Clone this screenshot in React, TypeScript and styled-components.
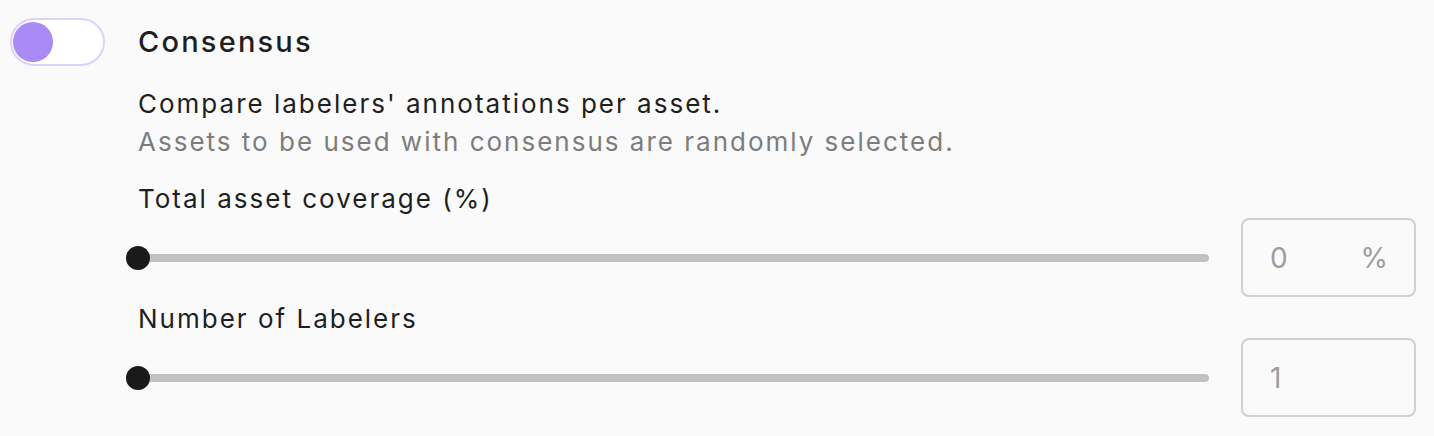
import React from "react";
import styled, { createGlobalStyle } from "styled-components";

const Global = createGlobalStyle`
  html, body {
    margin: 0;
    padding: 0;
    background: #fafafa;
    font-family: Inter, "Noto Sans", sans-serif;
  }
`;

const Panel = styled.div`
  width: 1434px;
  height: 436px;
  background: #fafafa;
  display: grid;
  grid-template-columns: 128px 1fr;
  padding: 18px 18px 0 10px;
  box-sizing: border-box;
`;

const ToggleTrack = styled.div<{ $on: boolean }>`
  width: 95px;
  height: 48px;
  box-sizing: border-box;
  border: 2px solid #ddd2fb;
  border-radius: 24px;
  background: #fff;
  display: flex;
  align-items: center;
  justify-content: ${(p) => (p.$on ? "flex-end" : "flex-start")};
  padding: 0 1px;
`;

const Knob = styled.div`
  width: 40px;
  height: 40px;
  border-radius: 50%;
  background: #a98af6;
`;

const Body = styled.div`
  display: flex;
  flex-direction: column;
`;

const Title = styled.div`
  font-size: 29px;
  font-weight: 500;
  letter-spacing: 2.2px;
  color: #1f1f1f;
  line-height: 48px;
  margin-bottom: 19px;
`;

const Text = styled.div<{ $muted?: boolean }>`
  font-size: 26px;
  line-height: 38px;
  letter-spacing: 2px;
  color: ${(p) => (p.$muted ? "#7d7d7d" : "#1f1f1f")};
`;

const Label = styled(Text)<{ $gap: number }>`
  margin-top: ${(p) => p.$gap}px;
`;

const SliderRow = styled.div`
  display: flex;
  align-items: center;
  gap: 32px;
`;

const Track = styled.div`
  flex: 1;
  height: 8px;
  border-radius: 4px;
  background: #c1c1c1;
  position: relative;
`;

const Thumb = styled.div`
  position: absolute;
  top: 50%;
  width: 24px;
  height: 24px;
  border-radius: 50%;
  background: #1a1a1a;
  transform: translate(-50%, -50%);
`;

const NumberBox = styled.div`
  width: 175px;
  height: 79px;
  box-sizing: border-box;
  border: 2px solid #d0d0d0;
  border-radius: 8px;
  display: flex;
  align-items: center;
  justify-content: space-between;
  padding: 0 26px 0 27px;
  font-size: 28px;
  color: #9d9d9d;
`;

const Slider = ({ value, min, max, unit }: { value: number; min: number; max: number; unit?: string }) => (
  <SliderRow>
    <Track>
      <Thumb style={{ left: `${((value - min) / (max - min)) * 100}%` }} />
    </Track>
    <NumberBox>
      <span>{value}</span>
      {unit && <span>{unit}</span>}
    </NumberBox>
  </SliderRow>
);

export default function App() {
  return (
    <>
      <Global />
      <Panel>
        <div>
          <ToggleTrack $on={false}>
            <Knob />
          </ToggleTrack>
        </div>
        <Body>
          <Title>Consensus</Title>
          <Text>Compare labelers' annotations per asset.</Text>
          <Text $muted>Assets to be used with consensus are randomly selected.</Text>
          <Label $gap={19}>Total asset coverage (%)</Label>
          <Slider value={0} min={0} max={100} unit="%" />
          <Label $gap={3}>Number of Labelers</Label>
          <Slider value={1} min={1} max={10} />
        </Body>
      </Panel>
    </>
  );
}
